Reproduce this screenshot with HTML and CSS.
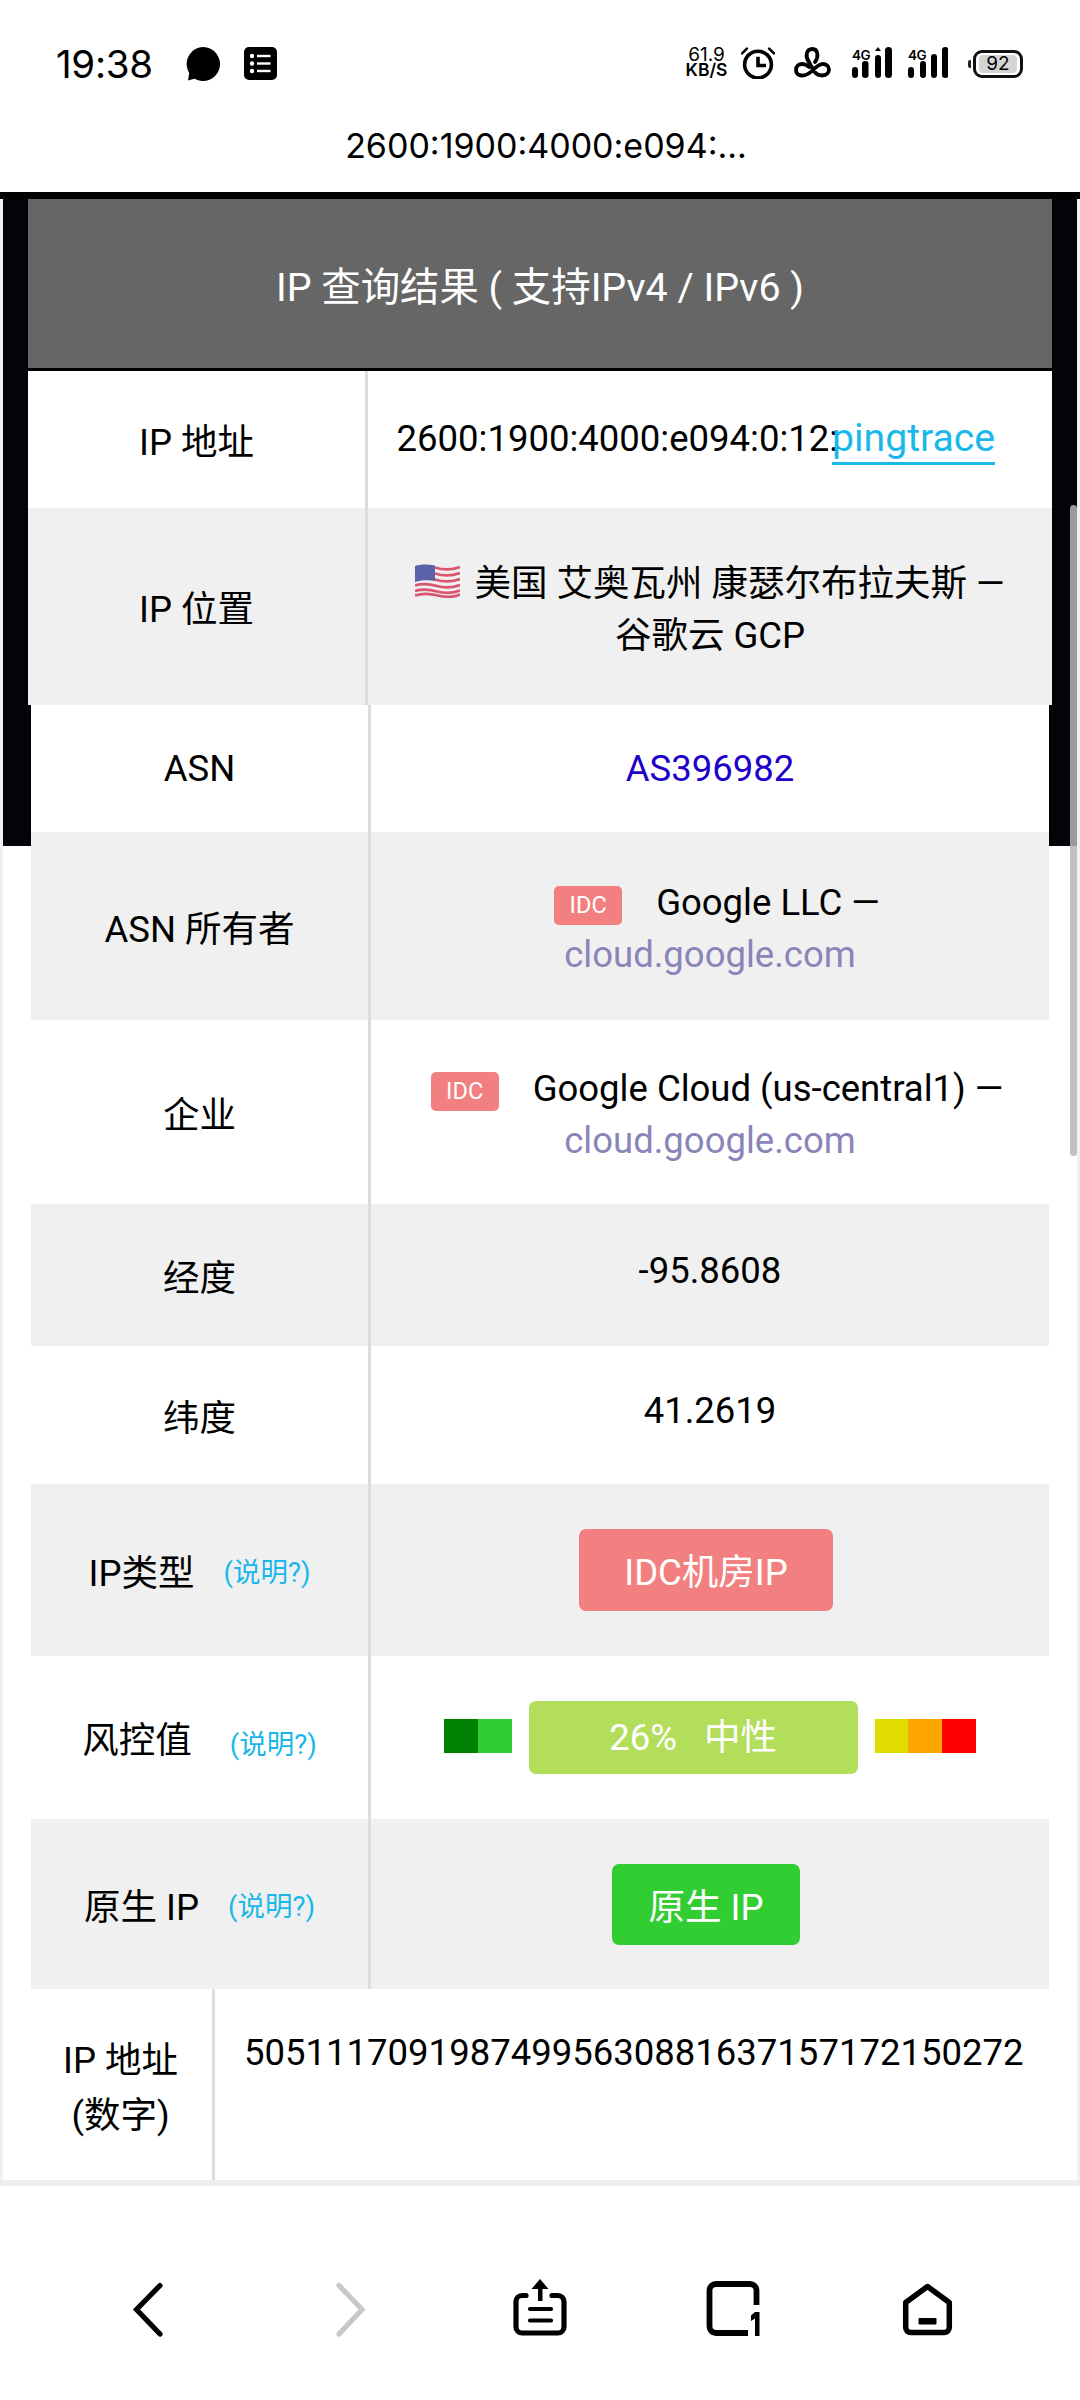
FILE: index.html
```html
<!DOCTYPE html>
<html lang="zh-CN">
<head>
<meta charset="utf-8">
<title>IP 查询结果</title>
<link rel="stylesheet" href="styles.css">
</head>
<body>
<header class="status">
  <div class="status-left">
    <span class="clock">19:38</span>
    <svg class="ic-bubble" viewBox="0 0 36 36"><path d="M18 1a17 17 0 1 1-8.500 31.700L3 34.500l1.200-7.600A17 17 0 0 1 18 1z" fill="#000"/></svg>
    <svg class="ic-list" viewBox="0 0 33 33"><rect width="33" height="33" rx="5" fill="#000"/><g fill="#fff"><circle cx="8" cy="9" r="2.200"/><circle cx="8" cy="16.500" r="2.200"/><circle cx="8" cy="24" r="2.200"/><rect x="13" y="7.800" width="13.500" height="2.400"/><rect x="13" y="15.300" width="13.500" height="2.400"/><rect x="13" y="22.800" width="13.500" height="2.400"/></g></svg>
  </div>
  <div class="status-right">
    <div class="speed"><span>61.9</span><b>KB/S</b></div>
    <svg class="ic-alarm" viewBox="1 1 32 30"><circle cx="17" cy="17.500" r="12.600" fill="none" stroke="#000" stroke-width="3.400"/><path d="M17 10v8.400h7.500" fill="none" stroke="#000" stroke-width="3.400"/><path d="M2 7l4.500-4.500M32 7l-4.500-4.500" stroke="#000" stroke-width="2.400" stroke-linecap="round"/></svg>
    <svg class="ic-link" viewBox="0 0 37 31"><path d="M21 15C25 10 24 2 18.500 2C12 2 11 10 15 15C18 20 20 28.500 28 28.500C33 28.500 35 25 35 22.500C35 19 32 17 29 17C25 17 22 20 19 23C16 26 13 28.500 8 28.500C4 28.500 2 26 2 23C2 19 5 17 8 17C11 17 13 18 15 20" fill="none" stroke="#000" stroke-width="3.800" stroke-linecap="round"/></svg>
    <svg class="ic-signal" viewBox="0 0 40 31"><text x="0" y="12.500" class="sig-text">4G</text><rect y="20" width="6" height="11" rx="3"/><rect x="10" y="14" width="6.500" height="17" rx="3"/><rect x="23" y="8" width="6" height="23" rx="3"/><path d="M26 0l3 4h-6z"/><rect x="33" y="0" width="7" height="31" rx="3.500"/></svg>
    <svg class="ic-signal ic-signal-b" viewBox="0 0 40 31"><text x="0" y="12.500" class="sig-text">4G</text><rect y="20" width="6" height="11" rx="3"/><rect x="12" y="14" width="6" height="17" rx="3"/><rect x="23" y="7" width="6" height="24" rx="3"/><rect x="34" y="0" width="6.500" height="31" rx="3.200"/></svg>
    <div class="battery"><span class="batt-nub"></span><span class="batt-body"><span class="batt-fill">92</span></span></div>
  </div>
</header>
<div class="appbar">2600:1900:4000:e094:...</div>

<main class="page">
  <section class="result">
    <h1 class="result-title">IP 查询结果 ( 支持IPv4 / IPv6 )</h1>
    <div class="row row-addr">
      <div class="key">IP 地址</div>
      <div class="val val-addr"><span class="addr-text">2600:1900:4000:e094:0:12:</span><a class="ping">pingtrace</a></div>
    </div>
    <div class="row row-geo alt">
      <div class="key">IP 位置</div>
      <div class="val"><p class="lines"><svg class="flag" viewBox="0 0 45 35"><path d="M0 3C8 0 15 1 22 3S37 5 45 2V32C37 35 30 34 23 32S8 30 0 33Z" fill="#f4eef0"/><g fill="none" stroke="#d8566e" stroke-width="2.800"><path d="M20 4.500C28 7 37 7 45 4"/><path d="M20 10.500C28 13 37 13 45 10"/><path d="M20 16.500C28 19 37 19 45 16"/><path d="M0 22.500C8 20 15 21 22 23S37 25 45 22"/><path d="M0 28C8 25.500 15 26.500 22 28.500S37 30.500 45 27.500"/><path d="M0 32.500C8 30 15 30.500 23 32.500S37 35 45 31.500"/></g><path d="M0 3C6 1 13 1 20 2.500V18C13 16.500 6 17 0 19Z" fill="#5a63a8"/></svg><span class="place">美国 艾奥瓦州 康瑟尔布拉夫斯 — 谷歌云 GCP</span></p></div>
    </div>
  </section>

  <section class="details">
    <div class="row row-asn">
      <div class="key">ASN</div>
      <div class="val"><a class="asn">AS396982</a></div>
    </div>
    <div class="row row-owner alt">
      <div class="key">ASN 所有者</div>
      <div class="val"><p class="lines"><span class="tag">IDC</span>Google LLC — <a class="domain">cloud.google.com</a></p></div>
    </div>
    <div class="row row-org">
      <div class="key">企业</div>
      <div class="val"><p class="lines"><span class="tag">IDC</span>Google Cloud (us-central1) — <a class="domain">cloud.google.com</a></p></div>
    </div>
    <div class="row row-lon alt">
      <div class="key">经度</div>
      <div class="val val-up">-95.8608</div>
    </div>
    <div class="row row-lat">
      <div class="key">纬度</div>
      <div class="val val-up">41.2619</div>
    </div>
    <div class="row row-type alt">
      <div class="key key-hint"><span>IP类型</span><a class="hint">(说明?)</a></div>
      <div class="val"><span class="badge badge-idc">IDC机房IP</span></div>
    </div>
    <div class="row row-risk">
      <div class="key key-hint key-wide"><span>风控值</span><a class="hint hint-low">(说明?)</a></div>
      <div class="val">
        <div class="meter">
          <div class="scale"><i class="seg c-dark"></i><i class="seg c-green"></i></div>
          <span class="badge badge-risk">26%   中性</span>
          <div class="scale"><i class="seg c-yellow"></i><i class="seg c-orange"></i><i class="seg c-red"></i></div>
        </div>
      </div>
    </div>
    <div class="row row-native alt">
      <div class="key key-hint"><span>原生 IP</span><a class="hint">(说明?)</a></div>
      <div class="val"><span class="badge badge-native">原生 IP</span></div>
    </div>
    <div class="row row-num">
      <div class="key">IP 地址<br>(数字)</div>
      <div class="val val-num">50511170919874995630881637157172150272</div>
    </div>
  </section>
  <div class="scrollbar"></div>
</main>

<nav class="bottom">
  <svg class="nav-ic nav-back" viewBox="0 0 40 66"><path d="M30 10.500L6.500 34.500L30 59" fill="none" stroke="#000" stroke-width="5.200" stroke-linecap="round" stroke-linejoin="miter"/></svg>
  <svg class="nav-ic nav-fwd" viewBox="0 0 40 66"><path d="M8 10.500L31 34.500L8 59" fill="none" stroke="#c8c8c8" stroke-width="5.200" stroke-linecap="round"/></svg>
  <svg class="nav-ic nav-share" viewBox="0 0 58 66"><path d="M15 20.500H11a6 6 0 0 0-6 6V52a6 6 0 0 0 6 6H47a6 6 0 0 0 6-6V26.500a6 6 0 0 0-6-6H41" fill="none" stroke="#000" stroke-width="5.200" stroke-linecap="round"/><path d="M29 4l8.500 10H20.500z" fill="#000"/><rect x="27" y="11" width="4.500" height="15"/><path d="M19 34h21M19 45.500h21" stroke="#000" stroke-width="4.200" stroke-linecap="round"/></svg>
  <svg class="nav-ic nav-tabs" viewBox="0 0 58 66"><path d="M44 58H12a6.500 6.500 0 0 1-6.500-6.500V15.500A6.500 6.500 0 0 1 12 9H46a6.500 6.500 0 0 1 6.500 6.500V30" fill="none" stroke="#000" stroke-width="5.800"/><path d="M51 37h4.500V61H51V43.500L47 46V40.500z"/></svg>
  <svg class="nav-ic nav-home" viewBox="0 0 54 66"><path d="M25.500 11.500L47.300 27.500V52.500a5 5 0 0 1-5 5H8.700a5 5 0 0 1-5-5V27.500Z" fill="none" stroke="#000" stroke-width="5.500" stroke-linejoin="round"/><rect x="16.500" y="43" width="18" height="6.500" rx="1"/></svg>
</nav>
</body>
</html>
```
FILE: styles.css
```css
* { box-sizing: border-box; }
html, body { margin: 0; padding: 0; }
body {
  width: 1080px;
  height: 2400px;
  overflow: hidden;
  background: #fff;
  color: #000;
  font-family: Roboto, "Noto Sans CJK SC", sans-serif;
  font-size: 36.500px;
  display: flex;
  flex-direction: column;
}

/* status bar */
.status {
  height: 112px;
  padding: 0 57px 0 56px;
  display: flex;
  justify-content: space-between;
  align-items: flex-start;
}
.status-left { display: flex; align-items: center; margin-top: 46px; height: 35px; }
.clock { font-family: Inter, sans-serif; font-size: 38.500px; width: 129px; letter-spacing: -0.3px; }
.ic-bubble { width: 36px; height: 36px; margin-right: 23px; }
.ic-list { width: 33px; height: 33px; }
.status-right { display: flex; align-items: flex-start; margin-top: 47px; }
.speed {
  width: 41px;
  margin-right: 14px;
  display: flex;
  flex-direction: column;
  align-items: center;
  font-family: Inter, sans-serif;
  font-size: 19px;
  line-height: 15px;
}
.speed b { font-weight: 600; font-size: 17.500px; }
.ic-alarm { width: 34px; height: 32px; margin-right: 19px; }
.ic-link { width: 37px; height: 31px; margin-right: 21px; }
.ic-signal { width: 40px; height: 31px; margin-right: 16px; }
.ic-signal-b { margin-right: 20px; }
.sig-text { font-family: Inter, sans-serif; font-size: 13.500px; font-weight: 600; letter-spacing: -0.5px; }
.battery { display: flex; align-items: center; height: 29px; margin-top: 2px; }
.batt-nub { width: 3px; height: 8px; background: #222; border-radius: 2px 0 0 2px; margin-right: 2px; }
.batt-body {
  width: 50px;
  height: 28px;
  border: 3px solid #111;
  border-radius: 9px;
  padding: 2px 3px;
}
.batt-fill {
  display: block;
  height: 100%;
  background: #d4d4d4;
  border-radius: 4px;
  font-family: Inter, sans-serif;
  font-size: 19px;
  line-height: 18px;
  text-align: center;
}

/* title */
.appbar {
  height: 80px;
  padding: 0 0 14px 12px;
  display: flex;
  align-items: center;
  justify-content: center;
  font-family: Inter, sans-serif;
  font-size: 34px;
}

/* page */
.page {
  position: relative;
  height: 1994px;
  overflow: hidden;
  border-top: 7px solid #000;
  border-bottom: 6px solid #eee;
  background:
    linear-gradient(#02040a, #02040a) no-repeat 3px 0 / 1074px 647px,
    linear-gradient(#fff, #fff) no-repeat 3px 0 / 1074px 100%,
    #f1f1f1;
}
.result { margin: 0 28px; background: #fff; }
.details { margin: 0 31px; background: #fff; }
.result-title {
  margin: 0;
  height: 172px;
  border-bottom: 3px solid #000;
  background: #666;
  color: #fff;
  font-size: 39.400px;
  font-weight: 400;
  display: flex;
  align-items: center;
  justify-content: center;
}
.row { display: grid; grid-template-columns: 340px 1fr; }
.alt { background: #f0f0f0; }
.key {
  border-right: 3px solid #ddd;
  display: flex;
  align-items: center;
  justify-content: center;
  text-align: center;
}
.val {
  display: flex;
  align-items: center;
  justify-content: center;
  text-align: center;
  padding: 0 30px;
}
.val-up { padding-bottom: 10px; }
.lines { margin: 0; padding-top: 6px; line-height: 52px; }

.row-addr { height: 137px; }
.row-geo { height: 197px; }
.row-asn { height: 127px; }
.row-owner { height: 188px; }
.row-org { height: 184px; }
.row-lon { height: 142px; }
.row-lat { height: 138px; }
.row-type { height: 172px; }
.row-risk { height: 163px; }
.row-native { height: 170px; }
.row-num { height: 191px; grid-template-columns: 184px 1fr; }
.row-num .key { padding-right: 2px; }

.val-addr { justify-content: flex-start; position: relative; padding: 0 0 3px 28.500px; }
.addr-text { white-space: nowrap; }
.ping {
  position: absolute;
  left: 464px;
  top: 42px;
  color: #1ab8ea;
  font-size: 39.200px;
  line-height: 50px;
  height: 52px;
  border-bottom: 3px solid #1ab8ea;
}
.flag { width: 45px; height: 35px; margin-right: 14px; vertical-align: -2px; }
.asn { color: #2200cc; }
.domain { color: #8a85b8; }
.tag {
  display: inline-block;
  width: 68px;
  height: 39px;
  margin: 0 34px 0 14px;
  border-radius: 5px;
  background: #f28080;
  color: #fff;
  font-size: 23.500px;
  line-height: 39px;
  text-align: center;
  vertical-align: 2px;
}
.key-hint { gap: 29px; }
.key-wide { gap: 38px; }
.hint { color: #1ab8ea; font-size: 27.500px; }
.hint-low { margin-top: 8px; }
.badge {
  display: inline-block;
  height: 82px;
  line-height: 88px;
  border-radius: 7px;
  color: #fff;
  text-align: center;
}
.badge-idc { width: 254px; margin-right: 8px; background: #f28080; }
.badge-native { width: 188px; margin: 1px 8px 0 0; height: 81px; background: #32cd32; }
.badge-risk { width: 329px; height: 73px; line-height: 73px; background: #b3de5b; white-space: pre; }
.meter { display: flex; align-items: center; gap: 17px; }
.scale { display: flex; margin-bottom: 3px; }
.seg { display: block; width: 33.700px; height: 34px; }
.c-dark { background: #008000; }
.c-green { background: #32cd32; }
.c-yellow { background: #e0dc00; }
.c-orange { background: #ffa500; }
.c-red { background: #ff0000; }
.key + .val-num {
  display: block;
  padding: 38px 0 0 29px;
  text-align: left;
  line-height: 52px;
  white-space: nowrap;
}
.row-num .key { line-height: 55px; padding-top: 6px; }

.scrollbar {
  position: absolute;
  left: 1070px;
  top: 306px;
  width: 7px;
  height: 651px;
  border-radius: 4px;
  background: rgba(181, 181, 181, .85);
}

/* bottom toolbar */
.bottom {
  flex: 1;
  display: flex;
  align-items: flex-start;
  padding: 89px 0 0 130px;
}
.nav-ic { height: 66px; flex: none; }
.nav-back { width: 40px; margin-right: 161px; }
.nav-fwd { width: 40px; margin-right: 140px; }
.nav-share { width: 58px; margin-right: 135px; }
.nav-tabs { width: 58px; margin-right: 140px; }
.nav-home { width: 54px; }
```
